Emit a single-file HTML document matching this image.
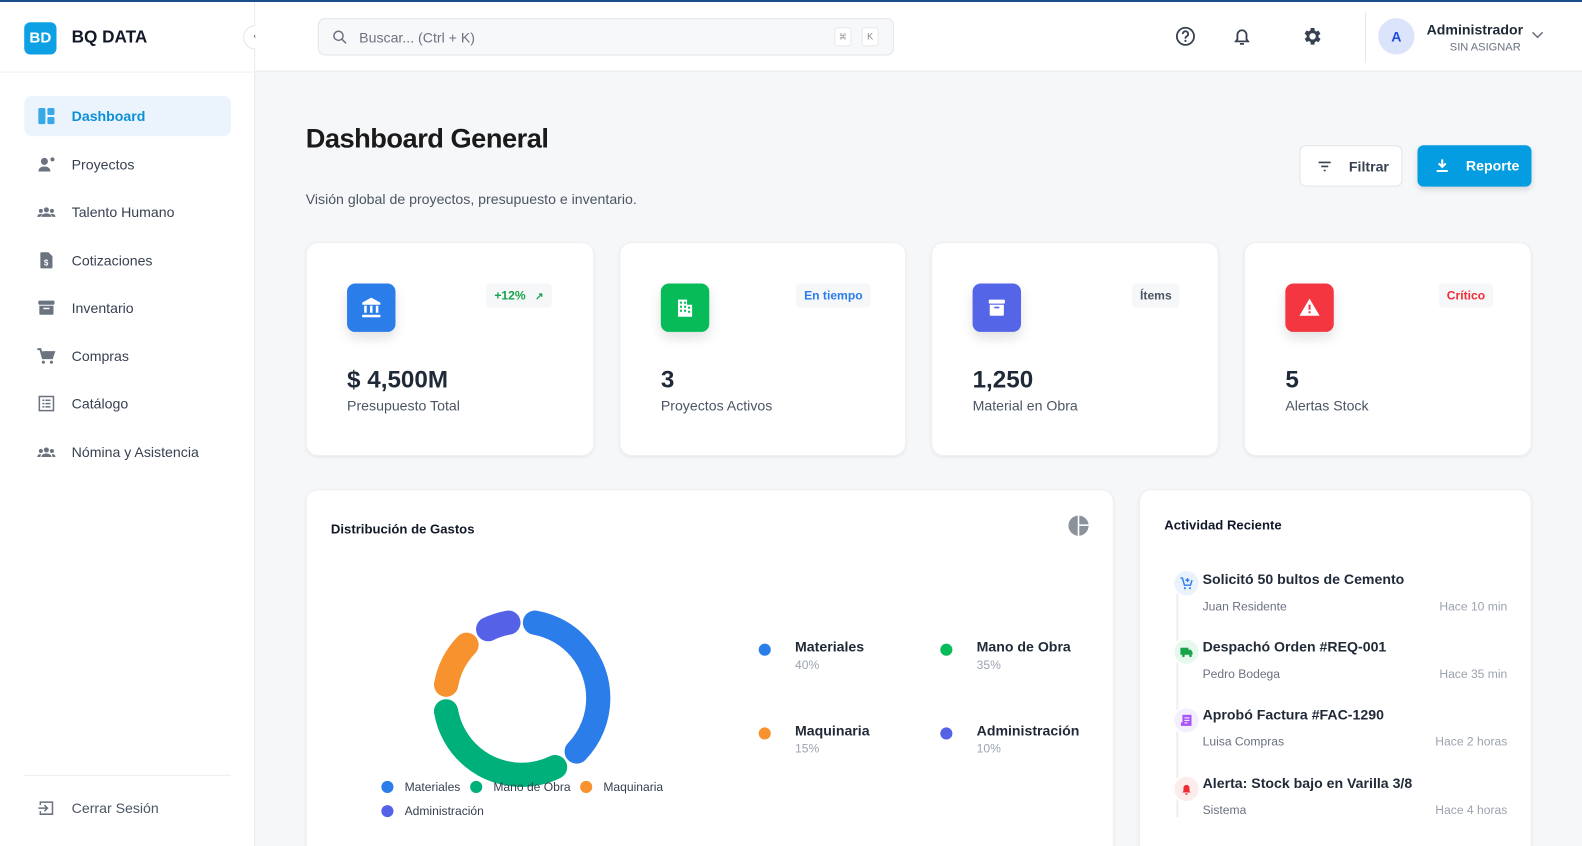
<!DOCTYPE html>
<html><head><meta charset="utf-8"><style>
*{box-sizing:border-box;margin:0;padding:0}
html,body{width:1582px;height:846px;overflow:hidden}
body{font-family:"Liberation Sans",sans-serif;background:#f6f7f9;position:relative;color:#1f2937}
#w{position:absolute;left:0;top:0;width:1568px;height:850px;transform:scale(1.0089);transform-origin:0 0}
.abs{position:absolute}
.topline{left:0;top:0;width:1582px;height:2px;background:#1b4f8c}
.side{left:0;top:2px;width:253px;height:850px;background:#fff;border-right:1px solid #e5e7eb}
.hdr{left:253px;top:2px;width:1329px;height:69px;background:#fff;border-bottom:1px solid #e5e7eb}
.nav{position:absolute;left:24px;width:205px;height:40px;border-radius:8px;display:flex;align-items:center;font-size:14px;color:#374151}
.nav svg{position:absolute;left:12px;width:20px;height:20px;fill:#6b7280}
.nav span{position:absolute;left:47px}
.card{background:#fff;border-radius:12px;box-shadow:0 1px 3px rgba(0,0,0,.06);border:1px solid #eef0f3}
.ic{position:absolute;left:40px;top:40px;width:48px;height:48px;border-radius:8px;box-shadow:0 6px 12px rgba(0,0,0,.12)}
.ic svg{position:absolute;left:12px;top:12px;width:24px;height:24px;fill:#fff}
.badge{position:absolute;top:40px;height:24px;border-radius:4px;background:#f6f7f9;font-size:12px;font-weight:bold;line-height:24px;padding:0 8px}
.val{position:absolute;left:40px;top:122px;font-size:24px;font-weight:bold;color:#1f2937}
.lbl{position:absolute;left:40px;top:153px;font-size:14px;color:#4b5563}
.lg{position:absolute;font-size:14px;font-weight:bold;color:#1f2937}
.lg i{position:absolute;left:-36px;top:5px;width:12px;height:12px;border-radius:50%}
.lg small{display:block;font-size:12px;font-weight:normal;color:#9ca3af;margin-top:3px}
.act{position:absolute;left:62px;width:302px}
.act b{display:block;font-size:14px;color:#1f2937;font-weight:bold}
.act .m{display:flex;justify-content:space-between;font-size:12px;color:#6b7280;margin-top:12px}
.act .m span:last-child{color:#9ca3af}
.dot{position:absolute;left:32px;width:28px;height:28px;border-radius:50%;border:2px solid #fff}
.dot svg{position:absolute;left:5px;top:5px;width:14px;height:14px}
</style></head><body><div id="w">
<div class="abs topline"></div>
<div class="abs side">
 <div class="abs" style="left:24px;top:20px;width:32px;height:32px;border-radius:6px;background:#0ea0e4;color:#fff;font-weight:bold;font-size:15px;line-height:32px;text-align:center">BD</div>
 <div class="abs" style="left:71px;top:25px;font-size:17px;font-weight:bold;color:#111827">BQ DATA</div>
 <div class="abs" style="left:0;top:69px;width:253px;height:1px;background:#eef0f3"></div>
 <div class="nav" style="top:93px;background:#ebf4fc;color:#0b8fd8;font-weight:bold"><svg viewBox="0 0 20 20" style="fill:#38a8e6"><rect x="2" y="2" width="7" height="16" rx="1.5"/><rect x="11" y="2" width="7" height="7" rx="1.5"/><rect x="11" y="11" width="7" height="7" rx="1.5"/></svg><span>Dashboard</span></div>
 <div class="nav" style="top:141px"><svg viewBox="0 0 20 20"><circle cx="8" cy="7" r="3.5"/><path d="M2 17c0-3.5 3-5 6-5s6 1.5 6 5z"/><circle cx="16" cy="5" r="2"/></svg><span>Proyectos</span></div>
 <div class="nav" style="top:188px"><svg viewBox="0 0 20 20"><circle cx="10" cy="8" r="2.5"/><circle cx="4.5" cy="9" r="2"/><circle cx="15.5" cy="9" r="2"/><path d="M5 15c0-2.5 2.5-3.5 5-3.5s5 1 5 3.5zM1 15c0-2 1.5-3 3.5-3 .5 0 1 0 1.2.2L4 15zM19 15c0-2-1.5-3-3.5-3-.5 0-1 0-1.2.2L16 15z"/></svg><span>Talento Humano</span></div>
 <div class="nav" style="top:236px"><svg viewBox="0 0 20 20"><path d="M5 2h7l4 4v11a1 1 0 0 1-1 1H5a1 1 0 0 1-1-1V3a1 1 0 0 1 1-1z"/><text x="7.5" y="15" font-size="8" fill="#fff" font-weight="bold">$</text></svg><span>Cotizaciones</span></div>
 <div class="nav" style="top:283px"><svg viewBox="0 0 20 20"><rect x="2" y="3" width="16" height="4" rx="1"/><path d="M3 8h14v8a1 1 0 0 1-1 1H4a1 1 0 0 1-1-1z"/><rect x="7" y="10" width="6" height="1.5" fill="#fff"/></svg><span>Inventario</span></div>
 <div class="nav" style="top:331px"><svg viewBox="0 0 20 20"><path d="M1 3h3l2.5 9h9l2-6H6" fill="none" stroke="#6b7280" stroke-width="2"/><path d="M5 6h13l-2 6H6.5z"/><circle cx="7" cy="16" r="1.5"/><circle cx="15" cy="16" r="1.5"/></svg><span>Compras</span></div>
 <div class="nav" style="top:378px"><svg viewBox="0 0 20 20"><rect x="3" y="3" width="14" height="14" fill="none" stroke="#6b7280" stroke-width="1.5"/><rect x="6" y="6" width="2" height="1.5"/><rect x="9" y="6" width="5" height="1.5"/><rect x="6" y="9.3" width="2" height="1.5"/><rect x="9" y="9.3" width="5" height="1.5"/><rect x="6" y="12.5" width="2" height="1.5"/><rect x="9" y="12.5" width="5" height="1.5"/></svg><span>Catálogo</span></div>
 <div class="nav" style="top:426px"><svg viewBox="0 0 20 20"><circle cx="10" cy="8" r="2.5"/><circle cx="4.5" cy="9" r="2"/><circle cx="15.5" cy="9" r="2"/><path d="M5 15c0-2.5 2.5-3.5 5-3.5s5 1 5 3.5zM1 15c0-2 1.5-3 3.5-3L4 15zM19 15c0-2-1.5-3-3.5-3L16 15z"/></svg><span>Nómina y Asistencia</span></div>
 <div class="abs" style="left:24px;top:766px;width:205px;height:1px;background:#eceef1"></div>
 <div class="nav" style="top:779px;color:#4b5563"><svg viewBox="0 0 20 20"><path d="M4 7V4h12v12H4v-3" fill="none" stroke="#6b7280" stroke-width="1.5"/><path d="M2 10h9M8 7l3 3-3 3" fill="none" stroke="#6b7280" stroke-width="1.5"/></svg><span>Cerrar Sesión</span></div>
</div>
<div class="abs" style="left:241px;top:25px;width:24px;height:24px;border-radius:50%;background:#fff;border:1px solid #e5e7eb;font-size:11px;line-height:21px;text-align:center;color:#555">‹</div>
<div class="abs hdr">
 <div class="abs" style="left:62px;top:16px;width:571px;height:37px;border:1px solid #e2e5e9;border-radius:7px;background:#f7f8fa">
  <svg class="abs" style="left:13px;top:10px" width="16" height="16" viewBox="0 0 16 16"><circle cx="6.5" cy="6.5" r="4.5" fill="none" stroke="#6b7280" stroke-width="1.5"/><path d="M10 10l4 4" stroke="#6b7280" stroke-width="1.5"/></svg>
  <div class="abs" style="left:40px;top:10px;font-size:14px;color:#6b7280">Buscar... (Ctrl + K)</div>
  <div class="abs" style="left:511px;top:8px;width:17px;height:19px;border:1px solid #e5e7eb;border-radius:3px;background:#fff;font-size:8px;color:#999;text-align:center;line-height:17px">⌘</div>
  <div class="abs" style="left:538px;top:8px;width:17px;height:19px;border:1px solid #e5e7eb;border-radius:3px;background:#fff;font-size:9px;color:#888;text-align:center;line-height:17px">K</div>
 </div>
 <svg class="abs" style="left:911px;top:23px" width="22" height="22" viewBox="0 0 22 22"><circle cx="11" cy="11" r="8.5" fill="none" stroke="#374151" stroke-width="1.8"/><path d="M8.3 8.7a2.7 2.7 0 1 1 3.7 2.5c-.7.3-1 .8-1 1.5v.6" fill="none" stroke="#374151" stroke-width="1.8"/><circle cx="11" cy="15.5" r="1.1" fill="#374151"/></svg>
 <svg class="abs" style="left:967px;top:23px" width="22" height="22" viewBox="0 0 22 22"><path d="M5 16h12l-1.5-2V9.5a4.5 4.5 0 0 0-9 0V14z" fill="none" stroke="#374151" stroke-width="1.8"/><path d="M9 18.5h4" stroke="#374151" stroke-width="1.8"/></svg>
 <svg class="abs" style="left:1037px;top:23px" width="22" height="22" viewBox="0 0 24 24"><path fill="#374151" d="M19.4 13a7.5 7.5 0 0 0 0-2l2.1-1.6-2-3.5-2.5 1a7 7 0 0 0-1.7-1L15 3h-4l-.4 2.7a7 7 0 0 0-1.7 1l-2.5-1-2 3.5L6.6 11a7.5 7.5 0 0 0 0 2l-2.1 1.6 2 3.5 2.5-1a7 7 0 0 0 1.7 1L11 21h4l.4-2.7a7 7 0 0 0 1.7-1l2.5 1 2-3.5zM13 15.5a3.5 3.5 0 1 1 0-7 3.5 3.5 0 0 1 0 7z" transform="translate(-1 0)"/></svg>
 <div class="abs" style="left:1100px;top:10px;width:1px;height:50px;background:#e5e7eb"></div>
 <div class="abs" style="left:1113px;top:16px;width:36px;height:36px;border-radius:50%;background:#dbe4fb;color:#1d4ed8;font-weight:bold;font-size:14px;text-align:center;line-height:36px">A</div>
 <div class="abs" style="left:1161px;top:19px;font-size:14px;font-weight:bold;color:#1f2937">Administrador</div>
 <div class="abs" style="left:1184px;top:39px;font-size:11px;color:#6b7280">SIN ASIGNAR</div>
 <svg class="abs" style="left:1265px;top:28px" width="12" height="10" viewBox="0 0 12 10"><path d="M1 2l5 5 5-5" fill="none" stroke="#6b7280" stroke-width="1.5"/></svg>
</div>

<div class="abs" style="left:303px;top:122px;font-size:27px;font-weight:bold;color:#1a1a1a;letter-spacing:-.5px">Dashboard General</div>
<div class="abs" style="left:303px;top:189px;font-size:14px;color:#4b5563">Visión global de proyectos, presupuesto e inventario.</div>
<div class="abs" style="left:1288px;top:144px;width:102px;height:41px;border:1px solid #e2e5e9;border-radius:6px;background:#fff">
 <svg class="abs" style="left:17px;top:14px" width="14" height="12" viewBox="0 0 14 12"><path d="M1 2h12M3.5 6h7M6 10h2" stroke="#374151" stroke-width="1.6"/></svg>
 <div class="abs" style="left:48px;top:12px;font-size:14px;font-weight:bold;color:#374151">Filtrar</div></div>
<div class="abs" style="left:1405px;top:144px;width:113px;height:41px;border-radius:6px;background:#059de2;box-shadow:0 3px 6px rgba(0,0,0,.12)">
 <svg class="abs" style="left:18px;top:13px" width="13" height="14" viewBox="0 0 13 14"><path d="M6.5 1v7M3 5l3.5 3.5L10 5" fill="none" stroke="#fff" stroke-width="2"/><path d="M1 12.5h11" stroke="#fff" stroke-width="2"/></svg>
 <div class="abs" style="left:48px;top:12px;font-size:14px;font-weight:bold;color:#fff">Reporte</div></div>

<div class="abs card" style="left:303px;top:240px;width:286px;height:212px">
 <div class="ic" style="background:#2b7de9"><svg viewBox="0 0 24 24"><path d="M12 2L3 7v2h18V7z"/><rect x="5" y="10" width="2.5" height="7"/><rect x="10.75" y="10" width="2.5" height="7"/><rect x="16.5" y="10" width="2.5" height="7"/><rect x="3" y="19" width="18" height="2.5"/></svg></div>
 <div class="badge" style="left:178px;color:#16a34a">+12% <span style="margin-left:6px;font-size:10px">↗</span></div>
 <div class="val">$ 4,500M</div><div class="lbl">Presupuesto Total</div></div>
<div class="abs card" style="left:614px;top:240px;width:284px;height:212px">
 <div class="ic" style="background:#06bb58"><svg viewBox="0 0 24 24"><path d="M5 4h9v5h5v12H5z"/><g fill="#06bb58"><rect x="7" y="6" width="2" height="2"/><rect x="11" y="6" width="2" height="2"/><rect x="7" y="10" width="2" height="2"/><rect x="11" y="10" width="2" height="2"/><rect x="15" y="11" width="2" height="2"/><rect x="7" y="14" width="2" height="2"/><rect x="11" y="14" width="2" height="2"/><rect x="15" y="15" width="2" height="2"/></g></svg></div>
 <div class="badge" style="left:174px;color:#2b7de9">En tiempo</div>
 <div class="val">3</div><div class="lbl">Proyectos Activos</div></div>
<div class="abs card" style="left:923px;top:240px;width:285px;height:212px">
 <div class="ic" style="background:#5565e8"><svg viewBox="0 0 24 24"><rect x="4" y="4" width="16" height="4" rx="1"/><path d="M5 9h14v10a1 1 0 0 1-1 1H6a1 1 0 0 1-1-1z"/><rect x="9.5" y="11" width="5" height="1.6" fill="#5565e8"/></svg></div>
 <div class="badge" style="left:198px;color:#4b5563">Ítems</div>
 <div class="val">1,250</div><div class="lbl">Material en Obra</div></div>
<div class="abs card" style="left:1233px;top:240px;width:285px;height:212px">
 <div class="ic" style="background:#f43640"><svg viewBox="0 0 24 24"><path d="M12 3l10 17H2z"/><rect x="11" y="9" width="2" height="5" fill="#f43640"/><rect x="11" y="15.5" width="2" height="2" fill="#f43640"/></svg></div>
 <div class="badge" style="left:192px;color:#ef2b36">Crítico</div>
 <div class="val">5</div><div class="lbl">Alertas Stock</div></div>

<div class="abs card" style="left:303px;top:485px;width:801px;height:370px">
 <div class="abs" style="left:24px;top:31px;font-size:13px;font-weight:bold;color:#111827">Distribución de Gastos</div>
 <svg class="abs" style="left:754px;top:24px" width="22" height="22" viewBox="0 0 22 22"><circle cx="11" cy="11" r="10" fill="#8b929c"/><path d="M11 1v20M11 10.5h10" stroke="#fff" stroke-width="1.6"/></svg>
 <div class="lg" style="left:484px;top:147px"><i style="background:#2b7de9"></i>Materiales<small>40%</small></div>
 <div class="lg" style="left:664px;top:147px"><i style="background:#06bb58"></i>Mano de Obra<small>35%</small></div>
 <div class="lg" style="left:484px;top:230px"><i style="background:#f7922e"></i>Maquinaria<small>15%</small></div>
 <div class="lg" style="left:664px;top:230px"><i style="background:#5562e8"></i>Administración<small>10%</small></div>
</div>
<svg class="abs" style="left:0;top:0" width="1582" height="846" viewBox="0 0 1582 846">
 <g transform="rotate(-90 517 692)" fill="none" stroke-width="24" stroke-linecap="round">
  <circle cx="517" cy="692" r="76" stroke="#2b7de9" stroke-dasharray="164.5 477.5" stroke-dashoffset="-13.3"/>
  <circle cx="517" cy="692" r="76" stroke="#00b07a" stroke-dasharray="140.6 477.5" stroke-dashoffset="-204.3"/>
  <circle cx="517" cy="692" r="76" stroke="#f7922e" stroke-dasharray="45.1 477.5" stroke-dashoffset="-371.4"/>
  <circle cx="517" cy="692" r="76" stroke="#5562e8" stroke-dasharray="21.2 477.5" stroke-dashoffset="-443"/>
 </g>
 <g font-family="Liberation Sans, sans-serif" font-size="12" fill="#374151">
  <circle cx="384" cy="780" r="6" fill="#2b7de9"/><text x="401" y="784">Materiales</text>
  <circle cx="472" cy="780" r="6" fill="#00b07a"/><text x="489" y="784">Mano de Obra</text>
  <circle cx="581" cy="780" r="6" fill="#f7922e"/><text x="598" y="784">Maquinaria</text>
  <circle cx="384" cy="804" r="6" fill="#5562e8"/><text x="401" y="808">Administración</text>
 </g>
</svg>

<div class="abs card" style="left:1129px;top:485px;width:389px;height:370px">
 <div class="abs" style="left:24px;top:27px;font-size:13px;font-weight:bold;color:#111827">Actividad Reciente</div>
 <div class="abs" style="left:36px;top:88px;width:2px;height:236px;background:#eceef1"></div>
 <div class="dot" style="top:78px;background:#eaf2fe"><svg viewBox="0 0 14 14"><path d="M1 2h2l2 7h6l1.5-5" fill="none" stroke="#2b7de9" stroke-width="1.4"/><circle cx="5.5" cy="12" r="1" fill="#2b7de9"/><circle cx="10.5" cy="12" r="1" fill="#2b7de9"/><path d="M8 2v4M6 4h4" stroke="#2b7de9" stroke-width="1.4"/></svg></div>
 <div class="act" style="top:80px"><b>Solicitó 50 bultos de Cemento</b><div class="m"><span>Juan Residente</span><span>Hace 10 min</span></div></div>
 <div class="dot" style="top:146px;background:#e7f8ee"><svg viewBox="0 0 14 14"><rect x="1" y="3" width="8" height="7" fill="#16a34a"/><path d="M9 5h2.5L13 7.5V10H9z" fill="#16a34a"/><circle cx="4" cy="11" r="1.3" fill="#16a34a"/><circle cx="11" cy="11" r="1.3" fill="#16a34a"/></svg></div>
 <div class="act" style="top:147px"><b>Despachó Orden #REQ-001</b><div class="m"><span>Pedro Bodega</span><span>Hace 35 min</span></div></div>
 <div class="dot" style="top:214px;background:#f4effd"><svg viewBox="0 0 14 14"><rect x="3" y="1.5" width="9" height="11" fill="#a855f7"/><path d="M5 4.5h5M5 7h5M5 9.5h3" stroke="#fff" stroke-width="1"/><rect x="1.5" y="9" width="2" height="3.5" fill="#a855f7"/></svg></div>
 <div class="act" style="top:214px"><b>Aprobó Factura #FAC-1290</b><div class="m"><span>Luisa Compras</span><span>Hace 2 horas</span></div></div>
 <div class="dot" style="top:282px;background:#fdecec"><svg viewBox="0 0 14 14"><path d="M3 10.5h8l-1-1.5V6a3 3 0 0 0-6 0v3z" fill="#ef2b36"/><rect x="6" y="11.2" width="2" height="1.5" fill="#ef2b36"/></svg></div>
 <div class="act" style="top:282px"><b>Alerta: Stock bajo en Varilla 3/8</b><div class="m"><span>Sistema</span><span>Hace 4 horas</span></div></div>
</div>
</div></body></html>
